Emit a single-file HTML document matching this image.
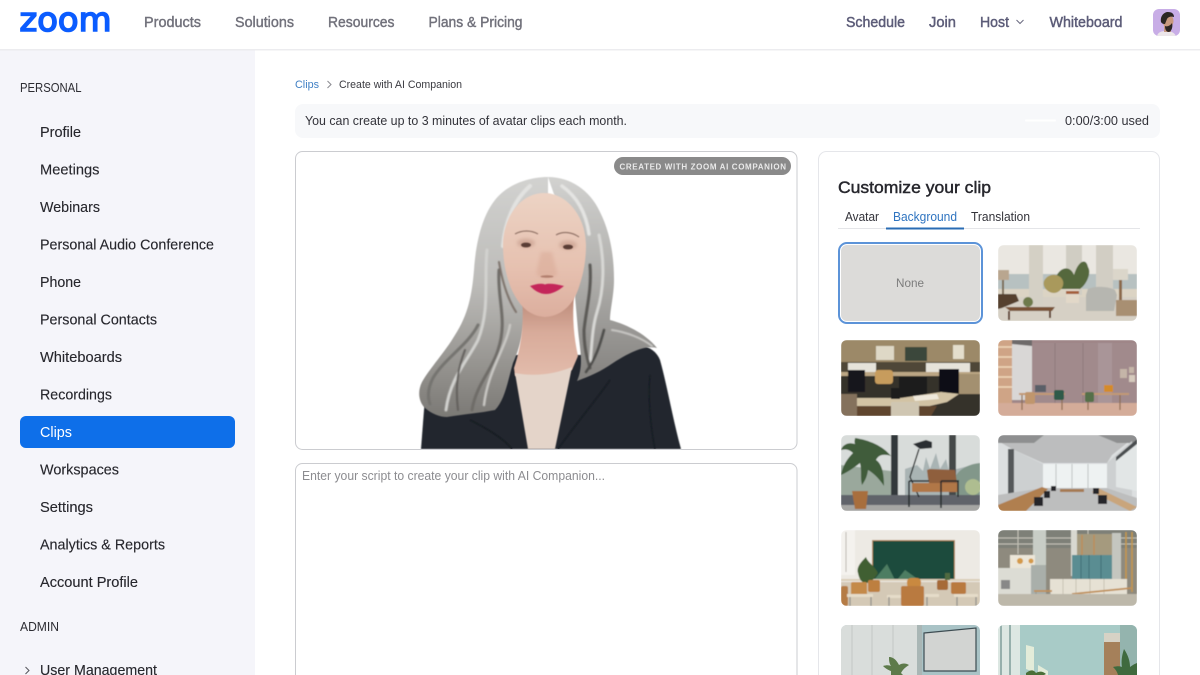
<!DOCTYPE html>
<html lang="en"><head><meta charset="utf-8"><title>Zoom Clips</title>
<style>
html,body{margin:0;padding:0;width:1200px;height:675px;overflow:hidden;background:#fff}
svg{display:block}
text{font-family:"Liberation Sans",sans-serif}
.nav{font-size:14.5px;fill:#71717b;stroke:#71717b;stroke-width:.4px}
.navr{font-size:14.5px;fill:#5c5c78;stroke:#5c5c78;stroke-width:.45px}
.side{font-size:14.5px;fill:#26262c;stroke:#26262c;stroke-width:.12px}
.cap{font-size:12.5px;fill:#2c2c32}
.t12{font-size:12.5px;fill:#33333a}
</style></head><body>
<svg xmlns="http://www.w3.org/2000/svg" width="1200" height="675" viewBox="0 0 1200 675">
<defs>
<filter id="b1" x="-5%" y="-5%" width="110%" height="110%"><feGaussianBlur stdDeviation="0.45"/></filter>
<filter id="b15" x="-5%" y="-5%" width="110%" height="110%"><feGaussianBlur stdDeviation="0.8"/></filter>
<filter id="b2" x="-20%" y="-20%" width="140%" height="140%"><feGaussianBlur stdDeviation="1.8"/></filter>
<clipPath id="tc"><rect width="139" height="76" rx="6"/></clipPath>
<clipPath id="tc2"><path d="M0 50V6a6 6 0 0 1 6-6h127a6 6 0 0 1 6 6v44z"/></clipPath>
<linearGradient id="hairL" x1="0" y1="0" x2="0" y2="1"><stop offset="0" stop-color="#d2d2d0"/><stop offset=".45" stop-color="#bcbbb8"/><stop offset=".75" stop-color="#9a9894"/><stop offset="1" stop-color="#7b7975"/></linearGradient>
<linearGradient id="hairR" x1="0" y1="0" x2="0" y2="1"><stop offset="0" stop-color="#d2d2d0"/><stop offset=".5" stop-color="#aeadaa"/><stop offset="1" stop-color="#84827f"/></linearGradient>
<linearGradient id="skin" x1="0" y1="0" x2="0" y2="1"><stop offset="0" stop-color="#ecd3c4"/><stop offset=".6" stop-color="#e6c1b0"/><stop offset="1" stop-color="#dcae9e"/></linearGradient>
<linearGradient id="neck" x1="0" y1="0" x2="0" y2="1"><stop offset="0" stop-color="#b98776"/><stop offset=".45" stop-color="#d8ab9a"/><stop offset="1" stop-color="#e3bcac"/></linearGradient>
</defs>

<!-- header -->
<rect width="1200" height="50" fill="#fff"/>
<rect y="49" width="1200" height="1.5" fill="#ececef"/>
<text x="19.500" y="31" textLength="92" lengthAdjust="spacingAndGlyphs" style="font-family:'DejaVu Sans',sans-serif;font-size:33px;fill:#0b5cff;stroke:#0b5cff;stroke-width:1.6px">zoom</text>
<text class="nav" x="144" y="27" textLength="57" lengthAdjust="spacingAndGlyphs">Products</text>
<text class="nav" x="235" y="27" textLength="59" lengthAdjust="spacingAndGlyphs">Solutions</text>
<text class="nav" x="328" y="27" textLength="66.500" lengthAdjust="spacingAndGlyphs">Resources</text>
<text class="nav" x="428.500" y="27" textLength="94" lengthAdjust="spacingAndGlyphs">Plans &amp; Pricing</text>
<text class="navr" x="846" y="27" textLength="59" lengthAdjust="spacingAndGlyphs">Schedule</text>
<text class="navr" x="929" y="27" textLength="27" lengthAdjust="spacingAndGlyphs">Join</text>
<text class="navr" x="980" y="27" textLength="29" lengthAdjust="spacingAndGlyphs">Host</text>
<path d="M1016.500 20l3.500 3.500 3.500-3.500" fill="none" stroke="#6a6a80" stroke-width="1"/>
<text class="navr" x="1049.500" y="27" textLength="73" lengthAdjust="spacingAndGlyphs">Whiteboard</text>
<clipPath id="av"><rect x="1153" y="9" width="27" height="27" rx="6"/></clipPath>
<g clip-path="url(#av)"><rect x="1153" y="9" width="27" height="27" fill="#c8ade6"/>
<path d="M1157 36c1-4 5-5 9-5s8 1 10 5z" fill="#ece6ea"/>
<path d="M1164 25h7v7h-7z" fill="#c79a82"/>
<ellipse cx="1168" cy="21" rx="5.500" ry="6.500" fill="#c9997f"/>
<path d="M1161 22c-1-6 3-10 7-10s6 2 6 5c-3-1-6 0-7 2l-2 5c-1 0-3 0-4-2z" fill="#2b2623"/>
<path d="M1165 26c2 1 5 0 7-3 1 3 0 8-3 9-3 0-4-3-4-6z" fill="#2d2522"/>
</g>

<!-- sidebar -->
<rect y="50.500" width="255" height="624.500" fill="#f5f5fa"/>
<text class="cap" x="20" y="92" textLength="61.500" lengthAdjust="spacingAndGlyphs">PERSONAL</text>
<text class="side" x="40" y="137" textLength="41" lengthAdjust="spacingAndGlyphs">Profile</text>
<text class="side" x="40" y="174.500" textLength="59.500" lengthAdjust="spacingAndGlyphs">Meetings</text>
<text class="side" x="40" y="212" textLength="60" lengthAdjust="spacingAndGlyphs">Webinars</text>
<text class="side" x="40" y="249.500" textLength="174" lengthAdjust="spacingAndGlyphs">Personal Audio Conference</text>
<text class="side" x="40" y="287" textLength="41" lengthAdjust="spacingAndGlyphs">Phone</text>
<text class="side" x="40" y="324.500" textLength="117" lengthAdjust="spacingAndGlyphs">Personal Contacts</text>
<text class="side" x="40" y="362" textLength="82" lengthAdjust="spacingAndGlyphs">Whiteboards</text>
<text class="side" x="40" y="399.500" textLength="72" lengthAdjust="spacingAndGlyphs">Recordings</text>
<rect x="20" y="416" width="215" height="32" rx="6" fill="#0e6fe9"/>
<text class="side" x="40" y="437" textLength="32" lengthAdjust="spacingAndGlyphs" style="fill:#fff;stroke:none">Clips</text>
<text class="side" x="40" y="474.500" textLength="79" lengthAdjust="spacingAndGlyphs">Workspaces</text>
<text class="side" x="40" y="512" textLength="53" lengthAdjust="spacingAndGlyphs">Settings</text>
<text class="side" x="40" y="549.500" textLength="125" lengthAdjust="spacingAndGlyphs">Analytics &amp; Reports</text>
<text class="side" x="40" y="587" textLength="98" lengthAdjust="spacingAndGlyphs">Account Profile</text>
<text class="cap" x="20" y="631" textLength="39" lengthAdjust="spacingAndGlyphs">ADMIN</text>
<path d="M25.500 667l3.500 3.500-3.500 3.500" fill="none" stroke="#55555c" stroke-width="1"/>
<text class="side" x="40" y="675" textLength="117" lengthAdjust="spacingAndGlyphs">User Management</text>

<!-- breadcrumb + notice -->
<text x="295" y="88" textLength="24" lengthAdjust="spacingAndGlyphs" style="font-size:11px;fill:#3f7fc4">Clips</text>
<path d="M327.500 81l3.500 3.500-3.500 3.500" fill="none" stroke="#8a8a90" stroke-width="1"/>
<text x="339" y="88" textLength="123" lengthAdjust="spacingAndGlyphs" style="font-size:11px;fill:#3a3a40">Create with AI Companion</text>
<rect x="295" y="104" width="865" height="34" rx="8" fill="#f7f8fa"/>
<text class="t12" x="305" y="125" textLength="322" lengthAdjust="spacingAndGlyphs">You can create up to 3 minutes of avatar clips each month.</text>
<rect x="1025" y="119.500" width="31" height="2" rx="1" fill="#fff"/>
<text class="t12" x="1065" y="125" textLength="84" lengthAdjust="spacingAndGlyphs">0:00/3:00 used</text>

<!-- video panel -->
<rect x="295.500" y="151.500" width="501.500" height="298" rx="7" fill="#fff" stroke="#cbccd0"/>
<clipPath id="vid"><rect x="296" y="152" width="500" height="297"/></clipPath>
<g clip-path="url(#vid)">
<!-- jacket -->
<path d="M421 449L424 410C426 395 435 385 450 378L513 355H580L640 345C650 347 657 352 660 360C667 385 673 420 681 449Z" fill="#23272d" filter="url(#b1)"/>
<path d="M610 380C600 395 575 425 558 449M650 375C648 395 650 425 655 449M470 420C490 430 505 440 512 449" fill="none" stroke="#181b21" stroke-width="1.200" filter="url(#b1)"/>
<!-- hair lobes -->
<g filter="url(#b1)">
<path d="M548 177C525 177 505 187 495 200C483 215 476 240 474 270C472 295 468 315 455 335C445 352 430 368 422 382C417 392 419 402 425 408C432 414 440 417 447 417C465 414 480 413 495 410C505 400 508 380 513 363C521 345 525 325 525 300L548 240Z" fill="url(#hairL)"/>
<path d="M548 177C570 177 590 190 600 212C610 232 614 255 614 280C614 295 610 310 610 320C625 324 645 333 657 348C645 345 630 352 613 363C600 372 590 376 577 381C584 365 580 350 578 330L570 240Z" fill="url(#hairR)"/>
</g>
<!-- neck & blouse -->
<path d="M522 295C524 320 522 345 514 368L515 376C535 380 555 377 572 370L578 356C574 338 572 318 574 295Z" fill="url(#neck)" filter="url(#b1)"/>
<path d="M515 373C535 377 555 374 572 367L555 449H528Z" fill="#e4d4c9" filter="url(#b1)"/>
<!-- strands -->
<g fill="none" stroke-linecap="round" filter="url(#b15)">
<path d="M487 250C484 280 490 310 478 340C468 360 450 378 446 410" stroke="#d2d2cf" stroke-width="3"/>
<path d="M499 270C497 300 508 320 498 350C492 370 476 385 472 410" stroke="#6e6c68" stroke-width="3"/>
<path d="M478 325C468 345 445 358 433 378C428 388 427 396 430 404" stroke="#75736f" stroke-width="3"/>
<path d="M510 325C506 348 488 370 484 405" stroke="#c9c8c4" stroke-width="2.500"/>
<path d="M465 350C458 368 455 385 458 410" stroke="#625f5c" stroke-width="2"/>
<path d="M599 235C605 262 604 290 597 312C592 328 592 345 590 365" stroke="#d8d8d5" stroke-width="3"/>
<path d="M590 265C592 290 586 310 584 330C584 345 586 355 590 368" stroke="#5a5855" stroke-width="3"/>
<path d="M604 330C600 345 596 358 586 372" stroke="#4c4b49" stroke-width="2.500"/>
<path d="M612 330C626 332 642 338 652 346" stroke="#c9c8c5" stroke-width="2"/>
<path d="M530 186C514 200 505 222 503 246" stroke="#e2e2e0" stroke-width="4"/>
<path d="M562 186C576 196 586 212 589 234" stroke="#e4e4e2" stroke-width="3.500"/>
<path d="M499 262C502 280 507 298 516 312" stroke="#7a6f68" stroke-width="2"/>
</g>
<!-- face -->
<path d="M503 245C503 218 520 193 544 193C568 193 586 218 586 245C586 262 583 275 579 287C574 303 563 316 545 317C528 316 518 304 511 288C506 275 503 262 503 245Z" fill="url(#skin)" filter="url(#b1)"/>
<g filter="url(#b2)">
<path d="M541 252C539 262 536 270 537 275C541 279 553 279 557 275C557 270 554 262 552 252" fill="#d9a998" opacity=".55"/>
<ellipse cx="526" cy="243" rx="9" ry="4.500" fill="#b98a79" opacity=".45"/>
<ellipse cx="568" cy="245" rx="9" ry="4.500" fill="#b98a79" opacity=".45"/>
</g>
<g filter="url(#b1)">
<path d="M515 234C522 230 531 230 538 234M556 235C563 231 572 232 579 237" stroke="#94766a" stroke-width="1.200" fill="none"/>
<ellipse cx="526" cy="245" rx="5" ry="2.400" fill="#5a3c34"/>
<ellipse cx="568" cy="247" rx="5" ry="2.400" fill="#5a3c34"/>
<path d="M530 286C536 284 541 283 545 284.500C549 283 556 284 564 286C558 291 552 294 546 294C540 294 535 291 530 286Z" fill="#c4285a"/>
<ellipse cx="547" cy="276.500" rx="6.500" ry="1.300" fill="#b27f6e"/>
</g>
</g>
<!-- badge -->
<rect x="614" y="157" width="177" height="18" rx="9" fill="#8a8a8a"/>
<text x="619.500" y="169.500" textLength="166.500" lengthAdjust="spacing" style="font-size:8px;font-weight:700;fill:#e9e9e9">CREATED WITH ZOOM AI COMPANION</text>

<!-- script box -->
<path d="M295.500 675V470.500a7 7 0 0 1 7-7H790a7 7 0 0 1 7 7V675" fill="#fff" stroke="#cbccd0"/>
<text x="302" y="480" textLength="303" lengthAdjust="spacingAndGlyphs" style="font-size:12.500px;fill:#8c8c90">Enter your script to create your clip with AI Companion...</text>

<!-- customize card -->
<path d="M818.500 675V159.500a8 8 0 0 1 8-8H1151.500a8 8 0 0 1 8 8V675" fill="#fff" stroke="#e5e6ea"/>
<text x="838" y="193" textLength="153" lengthAdjust="spacingAndGlyphs" style="font-size:17px;fill:#27272d;stroke:#27272d;stroke-width:.45px">Customize your clip</text>
<text class="t12" x="845" y="221" textLength="34" lengthAdjust="spacingAndGlyphs">Avatar</text>
<text class="t12" x="893" y="221" textLength="64" lengthAdjust="spacingAndGlyphs" style="fill:#2f74c0">Background</text>
<text class="t12" x="971" y="221" textLength="59" lengthAdjust="spacingAndGlyphs">Translation</text>
<rect x="838" y="228" width="302" height="1" fill="#e4e5e8"/>
<rect x="886" y="227.500" width="78" height="2" fill="#2a6cb4"/>

<!-- selected None -->
<rect x="839" y="243" width="143" height="80" rx="8" fill="#fff" stroke="#5c93d8" stroke-width="2"/>
<rect x="841" y="245" width="139" height="76" rx="6" fill="#dcdbd9"/>
<text x="896" y="287" textLength="28" lengthAdjust="spacingAndGlyphs" style="font-size:12px;fill:#7c7c7c">None</text>

<!-- thumb 1: lounge -->
<g transform="translate(998 245)" clip-path="url(#tc)"><g filter="url(#b1)">
<rect width="139" height="76" fill="#eae7e1"/>
<rect y="29" width="139" height="18" fill="#b7c1c1"/>
<rect y="44" width="139" height="10" fill="#dcd4c4"/>
<rect y="52" width="139" height="24" fill="#d6d0c5"/>
<rect x="31" width="14" height="60" fill="#d4d0c5"/><rect x="68" width="16" height="50" fill="#d0cdc3"/><rect x="98" width="17" height="50" fill="#d2cec4"/>
<rect x="0" y="25" width="11" height="10" fill="#b9a68f"/><rect x="4" y="35" width="2" height="14" fill="#7a6a55"/>
<rect x="115" y="24" width="15" height="11" fill="#dbd6ca"/><rect x="121" y="35" width="3" height="20" fill="#8c6a4c"/>
<path d="M58 32C62 22 72 20 76 30C80 16 88 12 90 22C94 28 88 40 82 44H62C54 42 52 36 58 32Z" fill="#55683c"/>
<path d="M46 36C50 28 60 28 64 34C68 40 62 48 56 48C50 48 44 42 46 36Z" fill="#a9995c"/>
<rect x="68" y="44" width="13" height="14" fill="#e2d8c8"/><rect x="68" y="46" width="13" height="3" fill="#a5603c"/>
<path d="M88 50L90 44C96 41 110 41 117 45L119 50L116 66H88Z" fill="#b6b6b0"/>
<path d="M0 49H18L21 56L4 63L0 64Z" fill="#55402f"/>
<path d="M7 62H57L54 66H12Z" fill="#7a5338"/><path d="M11 66V75M52 66V73" stroke="#5d3e28" stroke-width="2"/>
<circle cx="30" cy="57" r="5" fill="#6e7a4c"/>
<rect x="118" y="55" width="21" height="16" fill="#a88f72"/>
</g></g>

<!-- thumb 2: office warm -->
<g transform="translate(841 340)" clip-path="url(#tc)"><g filter="url(#b1)">
<rect width="139" height="76" fill="#9c8968"/>
<rect x="35" y="6" width="18" height="14" fill="#ded8c6"/>
<rect x="64" y="7" width="22" height="14" fill="#3a463a"/>
<rect x="112" y="5" width="11" height="14" fill="#e4decc"/>
<rect x="0" y="22" width="139" height="12" fill="#4f4639"/>
<rect x="7" y="23" width="28" height="9" fill="#e6e3da"/><rect x="85" y="23" width="44" height="9" fill="#e6e3da"/>
<rect x="0" y="32" width="139" height="5" fill="#bba684"/>
<rect x="0" y="36" width="139" height="40" fill="#35302a"/>
<rect x="34" y="30" width="18" height="14" rx="3" fill="#c79c5d"/>
<rect x="7" y="30" width="17" height="22" fill="#15161a"/>
<rect x="98" y="29" width="20" height="24" fill="#0f1013"/>
<rect x="58" y="37" width="28" height="20" fill="#1c1c1f"/>
<rect x="118" y="34" width="21" height="20" fill="#a3906f"/>
<path d="M0 58H60L100 52L118 54L106 62L80 68H0Z" fill="#d2c3a4"/>
<path d="M12 66H96L90 76H12Z" fill="#5f452e"/>
<path d="M50 62H78V76H50Z" fill="#cfc6b2"/>
<path d="M0 54H16V76H0Z" fill="#84715c"/>
<rect x="50" y="48" width="9" height="11" fill="#1a1a1d"/>
<path d="M72 56L96 54L98 59L74 61Z" fill="#efe9db"/>
</g></g>

<!-- thumb 3: mauve -->
<g transform="translate(998 340)" clip-path="url(#tc)"><g filter="url(#b1)">
<rect width="139" height="76" fill="#9f8688"/>
<rect x="14" width="20" height="60" fill="#d9d7d6"/>
<rect width="14" height="66" fill="#cfa486"/>
<path d="M0 7H14M0 17H14M0 27H14M0 37H14M0 47H14" stroke="#f0d9ba" stroke-width="1.500"/>
<path d="M14 0H34V6L14 4Z" fill="#6e6a6a"/>
<rect x="34" y="3" width="105" height="60" fill="#a18a8c"/>
<path d="M57 3V63M85 3V63" stroke="#8f797b" stroke-width="1"/>
<rect x="100" y="3" width="14" height="60" fill="#a99598"/>
<rect x="122" y="29" width="7" height="9" fill="#c5b5a8"/><rect x="131" y="27" width="5" height="6" fill="#c5b5a8"/><rect x="131" y="35" width="6" height="7" fill="#d6cabd"/>
<rect y="63" width="139" height="13" fill="#d4ac99"/>
<path d="M21 53H67V55H21ZM84 53H131V55H84Z" fill="#c39a74"/>
<path d="M24 55V70M64 55V70M90 55V70M122 55V70" stroke="#8e6c50" stroke-width="1.200"/>
<rect x="37" y="45" width="11" height="7" fill="#5a5f68"/>
<rect x="106" y="45" width="9" height="7" fill="#d48b2c"/>
<rect x="27" y="52" width="10" height="12" rx="2" fill="#c0966d"/><rect x="56" y="50" width="10" height="10" rx="2" fill="#2f5a4a"/><rect x="87" y="52" width="9" height="10" rx="2" fill="#557048"/>
</g></g>

<!-- thumb 4: window with plant -->
<g transform="translate(841 435)" clip-path="url(#tc)"><g filter="url(#b1)">
<rect width="139" height="76" fill="#d8dcda"/>
<path d="M64 60V34L76 30L82 36L85 22L89 34L95 18L99 34L105 24L108 36L139 28V60Z" fill="#a9b4b4"/>
<path d="M112 60C108 44 118 30 139 28V60Z" fill="#82978a"/>
<path d="M0 30L50 36V60H0Z" fill="#9aa89c"/>
<circle cx="132" cy="52" r="8" fill="#aebd90"/>
<rect x="50" width="7" height="62" fill="#33383a"/>
<rect x="108" width="7" height="62" fill="#44484a"/>
<rect y="60" width="139" height="12" fill="#60646a"/>
<rect y="70" width="139" height="6" fill="#a6a6a4"/>
<path d="M14 3C28 5 42 11 50 21C41 18 37 21 35 25C40 28 43 36 43 51C37 42 31 37 27 35C26 43 23 47 21 50C19 42 21 36 19 28C15 31 9 36 0 40C2 30 6 24 12 18C8 14 4 14 0 15C2 9 8 7 14 9C13 6 14 5 14 3Z" fill="#3f5c3a"/>
<path d="M11 56H27L25 74H14Z" fill="#a86e3e"/>
<path d="M78 14L69 42L78 62" stroke="#1f2324" stroke-width="1.300" fill="none"/>
<path d="M72 9L85 5L91 7V13L79 14Z" fill="#2a2e31"/>
<path d="M87 43L86 35L89 34L114 35L116 48H88Z" fill="#8f5f3c"/>
<rect x="71" y="48" width="46" height="9" rx="1" fill="#b17746"/>
<path d="M68 46H88M100 46H118M68 46V72M100 46V73M117 46V62" stroke="#24282a" stroke-width="1.500" fill="none"/>
</g></g>

<!-- thumb 5: bright office grey -->
<g transform="translate(998 435)" clip-path="url(#tc)"><g filter="url(#b1)">
<rect width="139" height="76" fill="#dcdfe0"/>
<path d="M0 0H139L114 20L109 28H45L14 14L0 6Z" fill="#bcbdbe"/>
<path d="M0 0H46L36 8H0ZM100 0H139V8H119Z" fill="#8e8f90"/>
<rect x="45" y="29" width="64" height="24" fill="#eef2f2"/>
<path d="M58 29V53M74 29V53M90 29V53" stroke="#c0c4c4"/>
<path d="M14 14L45 29V53L12 60ZM109 28L134 6V61L109 53Z" fill="#cdd0d1"/>
<rect x="10" y="14" width="6" height="46" fill="#55585a"/>
<path d="M118 22L139 4V56L118 52Z" fill="#e2e6e6"/><path d="M118 22L139 4V9L118 26Z" fill="#4a4d50"/>
<path d="M0 60L45 53H109L139 63V76H0Z" fill="#bdbebe"/>
<path d="M0 70L44 52L50 54L28 76H0Z" fill="#b07f50"/>
<path d="M62 54H86V57H62Z" fill="#a67a52"/>
<path d="M100 53L139 72L132 76L94 57Z" fill="#c9a57c"/>
<g fill="#25262a"><rect x="36" y="62" width="9" height="9"/><rect x="46" y="56" width="6" height="7"/><rect x="53" y="51" width="5" height="5"/><rect x="100" y="60" width="9" height="9"/><rect x="95" y="53" width="6" height="6"/></g>
</g></g>

<!-- thumb 6: classroom -->
<g transform="translate(841 530)" clip-path="url(#tc)"><g filter="url(#b1)">
<rect width="139" height="76" fill="#edeae4"/>
<rect width="14" height="45" fill="#f4f2ee"/><path d="M5 2V42" stroke="#b9b6ae"/>
<rect x="31" y="10" width="83" height="41" fill="#b48a5c"/>
<rect x="32" y="11" width="81" height="39" fill="#1f4b3d"/>
<path d="M33 50L46 34L54 50ZM56 50L64 40L78 50Z" fill="#4e7d62"/>
<rect y="52" width="139" height="24" fill="#d4c9b6"/>
<rect x="0" y="49" width="139" height="2" fill="#d9cdb8"/>
<path d="M17 43C15 37 21 31 25 27C27 33 33 35 37 43C34 48 30 53 25 53S18 48 17 43Z" fill="#3f5e30"/>
<rect x="10" y="52" width="16" height="14" rx="2" fill="#c48a4a"/>
<rect x="27" y="50" width="12" height="12" rx="2" fill="#bd7f40"/>
<rect x="66" y="48" width="14" height="10" rx="4" fill="#c98940"/>
<rect x="60" y="56" width="23" height="20" rx="2" fill="#b97a40"/>
<rect x="110" y="52" width="15" height="12" rx="2" fill="#b97a40"/><rect x="96" y="50" width="11" height="10" rx="2" fill="#a66a38"/>
<rect x="0" y="56" width="7" height="20" rx="2" fill="#b57c44"/>
<path d="M6 64H32V67H6ZM46 65H60V68H46ZM84 64H98V67H84ZM113 64H137V67H113Z" fill="#e5dcc9"/>
<path d="M9 67V76M30 67V76M48 67V76M86 67V76M116 67V76M135 67V76" stroke="#8e8d88" stroke-width="1.200"/>
<rect x="104" y="43" width="5" height="7" fill="#4f6b40"/>
</g></g>

<!-- thumb 7: factory -->
<g transform="translate(998 530)" clip-path="url(#tc)"><g filter="url(#b1)">
<rect width="139" height="76" fill="#8e8a7e"/>
<rect width="139" height="18" fill="#7e8078"/>
<path d="M0 8H139M0 14H139M20 0V24M40 0V24M74 0V24M90 0V30" stroke="#c5c3b8"/>
<path d="M76 4H120V28H76Z" fill="#a59a7e"/>
<path d="M84 5V45M96 5V45" stroke="#c18b50" stroke-width="1.200"/>
<rect x="35" y="0" width="13" height="60" fill="#c8cdc6"/>
<rect x="73" y="0" width="6" height="46" fill="#d8d8d0"/>
<rect x="74" y="25" width="40" height="24" fill="#5a8d92"/>
<path d="M83 25V49M91 25V49M103 25V49" stroke="#3f7075"/>
<rect x="114" y="3" width="9" height="46" fill="#c4c6bf"/>
<path d="M128 2V62M134 2V62" stroke="#c79846" stroke-width="1.500"/>
<rect x="12" y="25" width="25" height="13" fill="#ece6d8"/>
<circle cx="22" cy="31" r="3" fill="#d49a4a"/><circle cx="33" cy="31" r="2.500" fill="#d49a4a"/>
<rect y="38" width="47" height="26" fill="#dcdcd4"/>
<rect x="33" y="35" width="15" height="29" fill="#a9afaa"/>
<rect x="3" y="50" width="9" height="9" fill="#888"/>
<rect x="52" y="49" width="77" height="15" fill="#e6e1d4"/>
<path d="M65 49V64M78 49V64M92 49V64M106 49V64" stroke="#c8c3b5"/>
<path d="M36 61H54M74 64L134 58" stroke="#c09058" stroke-width="1.800"/>
<path d="M38 62V70M52 62V70" stroke="#9a9a90" stroke-width="1.200"/>
<rect y="64" width="139" height="12" fill="#bdb8aa"/>
</g></g>

<!-- thumb 8: pale room (cut by fold) -->
<g transform="translate(841 625)" clip-path="url(#tc2)">
<rect width="139" height="50" fill="#a9c3c6"/>
<rect width="76" height="50" fill="#d9dddb"/>
<path d="M11 0V50M31 0V50M52 0V50" stroke="#c2c7c6"/>
<rect x="76" width="5" height="50" fill="#a9b6b5"/>
<path d="M83 8L135 3V46H83Z" fill="#d2d4d2" stroke="#3d4c52" stroke-width="1.200"/>
<path d="M48 32C53 32 56 36 58 40C61 38 65 38 68 40C65 42 62 44 60 48L62 50H50L50 46C47 45 44 43 42 41C45 40 48 40 50 41C48 38 48 35 48 32Z" fill="#5d7a4a"/>
</g>

<!-- thumb 9: teal room (cut by fold) -->
<g transform="translate(998 625)" clip-path="url(#tc2)">
<rect width="139" height="50" fill="#a8cbc7"/>
<rect width="22" height="50" fill="#dce7e2"/>
<path d="M3 0V50M12 0V50" stroke="#7f9e9a" stroke-width="1.500"/>
<path d="M28 20L36 22V47L28 44ZM40 40L50 46V50H40Z" fill="#e3ecd9"/>
<rect x="106" y="8" width="16" height="42" fill="#a5805a"/>
<rect x="106" y="8" width="16" height="9" fill="#d6d2c5"/>
<rect x="122" y="0" width="17" height="50" fill="#94b4ae"/>
<path d="M126 24C130 30 132 36 132 42C136 39 139 38 139 38V50H120C119 46 117 44 115 42C119 41 122 41 124 42C123 36 124 30 126 24Z" fill="#3f6a3e"/>
<path d="M28 48C33 44 36 45 38 48C41 46 45 46 48 49L46 50H28Z" fill="#4a6f38"/>
</g>
</svg>
</body></html>
